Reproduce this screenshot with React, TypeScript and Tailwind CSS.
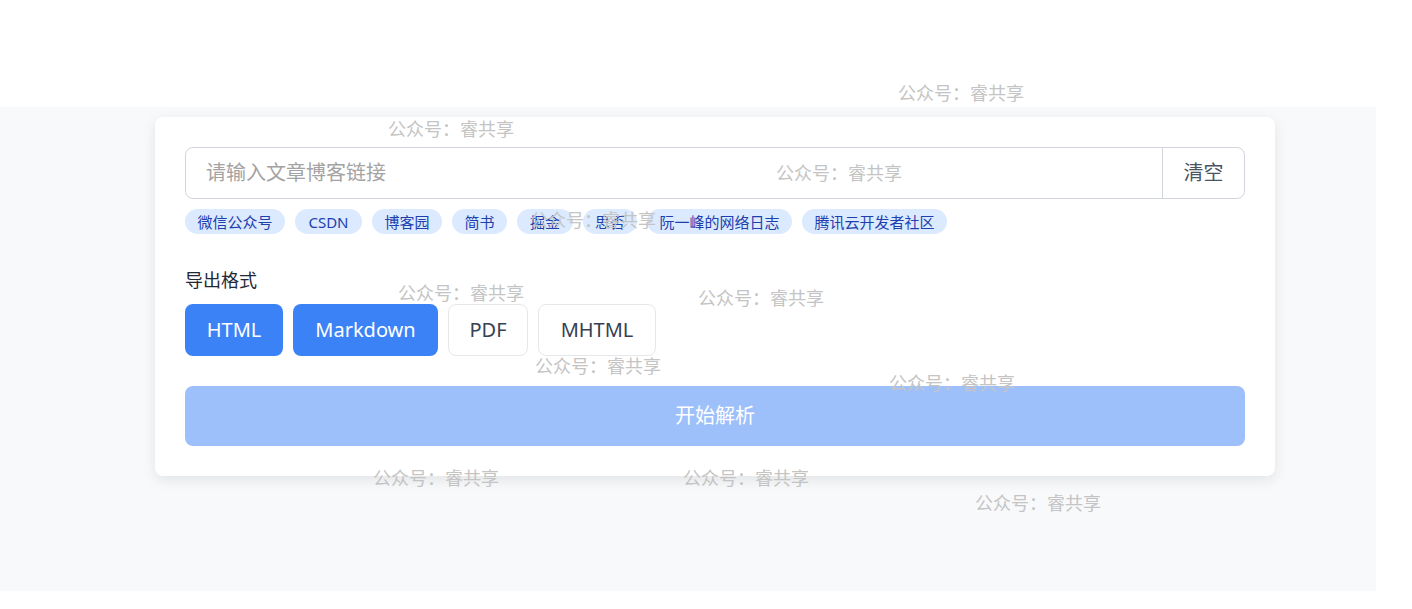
import React from "react";

const tags: [string, string][] = [
  ["微信公众号", "w-[100px]"],
  ["CSDN", "w-[67px]"],
  ["博客园", "w-[70px]"],
  ["简书", "w-[55px]"],
  ["掘金", "w-[56px]"],
  ["思否", "w-[54px]"],
  ["阮一峰的网络日志", "w-[145px]"],
  ["腾讯云开发者社区", "w-[145px]"],
];

const marks: [number, number][] = [
  [898, 81],
  [388, 117],
  [776, 161],
  [530, 208],
  [398, 281],
  [698, 286],
  [535, 354],
  [889, 371],
  [373, 466],
  [683, 466],
  [975, 491],
];

export default function App() {
  const font = { fontFamily: '"Noto Sans", "Noto Sans CJK SC", sans-serif' };
  return (
    <div className="relative w-[1412px] h-[609px] overflow-hidden bg-white" style={font}>
      <div className="mt-[107px] w-[1376px] h-[484px] bg-[#f8f9fb] pt-[10px] pl-[155px]">
        <div className="w-[1120px] bg-white rounded-lg shadow-[0_4px_14px_rgba(0,0,0,0.09)] p-[30px]">
          <div className="flex h-[52px] border border-[#d1d5db] rounded-lg">
            <div className="flex-1 flex items-center pl-5 text-[20px] text-[#a3a3a3]">请输入文章博客链接</div>
            <div className="w-[82px] flex items-center justify-center border-l border-[#d1d5db] text-[20px] text-[#4b5563]">清空</div>
          </div>
          <div className="flex gap-[10px] mt-[10px]">
            {tags.map(([t, w]) => (
              <span
                key={t}
                className={`${w} h-[25px] flex items-center justify-center rounded-full bg-[#dbeafe] text-[#1e40af] text-[15px] leading-[20px] whitespace-nowrap`}
              >
                {t}
              </span>
            ))}
          </div>
          <div className="mt-[34px] text-[18px] leading-[24px] text-[#1f2937]">导出格式</div>
          <div className="flex gap-[10px] mt-[12px]">
            <div className="w-[98px] h-[52px] flex items-center justify-center rounded-lg bg-[#3b82f6] text-white text-[20px]">HTML</div>
            <div className="w-[145px] h-[52px] flex items-center justify-center rounded-lg bg-[#3b82f6] text-white text-[20px]">Markdown</div>
            <div className="w-[80px] h-[52px] flex items-center justify-center rounded-lg border border-[#e5e7eb] text-[#374151] text-[20px]">PDF</div>
            <div className="w-[118px] h-[52px] flex items-center justify-center rounded-lg border border-[#e5e7eb] text-[#374151] text-[20px]">MHTML</div>
          </div>
          <div className="mt-[30px] h-[60px] rounded-lg bg-[#9dc0fa] flex items-center justify-center text-white text-[20px]">开始解析</div>
        </div>
      </div>
      <div className="absolute inset-0 pointer-events-none">
        {marks.map(([x, y], i) => (
          <div
            key={i}
            className="absolute text-[18px] leading-[24px] text-[#c4c4c4] whitespace-nowrap"
            style={{ left: x, top: y }}
          >
            公众号：睿共享
          </div>
        ))}
      </div>
    </div>
  );
}
